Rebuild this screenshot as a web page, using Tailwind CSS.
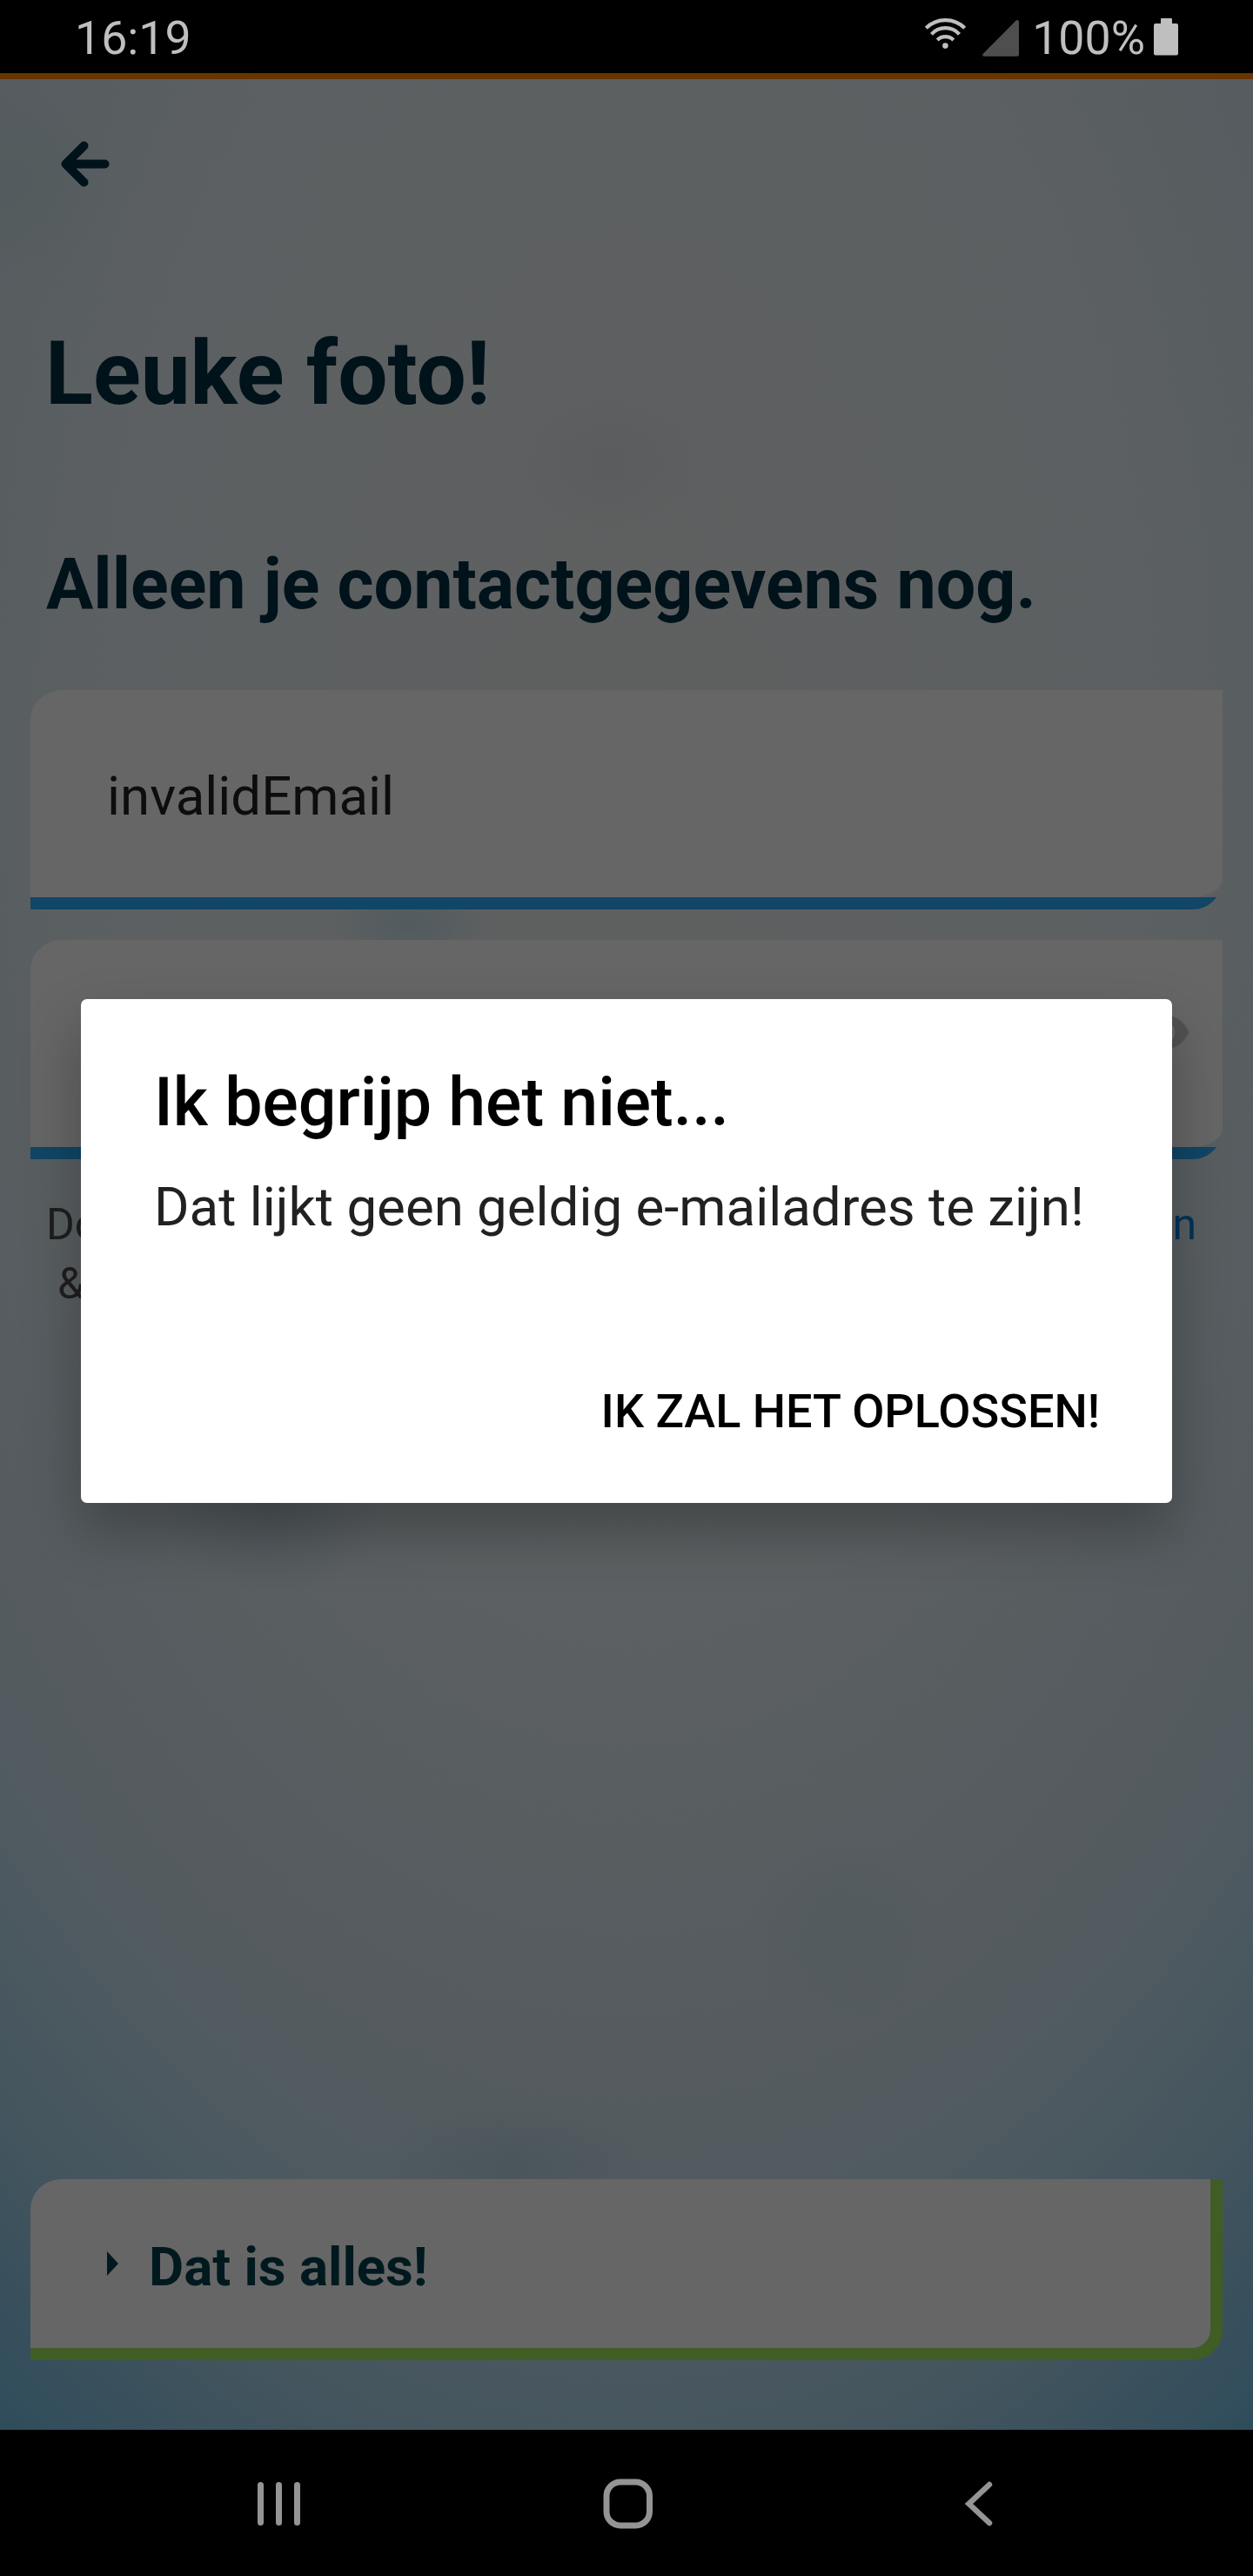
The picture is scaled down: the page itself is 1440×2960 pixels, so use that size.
<!DOCTYPE html>
<html lang="nl">
<head>
<meta charset="utf-8">
<title>Contactgegevens</title>
<script src="https://cdn.jsdelivr.net/npm/@tailwindcss/browser@4"></script>
</head>
<body class="bg-black">
<div class="relative flex h-[2960px] w-[1440px] flex-col overflow-hidden bg-black font-['Roboto',sans-serif]">

  <!-- Status bar -->
  <header class="flex h-[84px] shrink-0 items-center bg-black pl-[86px] pr-[86px] text-[53.7px] leading-[84px] text-[#bfbfbf]">
    <span class="mt-[3px]">16:19</span>
    <svg class="ml-auto h-[84px] w-[52px]" viewBox="1060 0 52 84" fill="none" stroke="#bfbfbf" stroke-width="4.2">
      <path d="M1064.3 32.3A31.4 31.4 0 0 1 1108.7 32.3M1070.5 39.3A21.5 21.5 0 0 1 1102.5 39.3M1077.2 46A13.3 13.3 0 0 1 1095.8 46"/>
      <circle cx="1086.4" cy="52.6" r="3.3" fill="#bfbfbf" stroke="none"/>
    </svg>
    <svg class="ml-[16px] h-[84px] w-[44px]" viewBox="1128 0 44 84"><path d="M1169 23Q1171 23 1171 25V63Q1171 64.7 1169 64.7H1130.500Q1128.500 64 1129.500 62L1167.500 23.700Q1168.200 23 1169 23Z" fill="#4e4e4e"/></svg>
    <span class="mt-[3px] ml-[14px]">100%</span>
    <svg class="-mr-[1px] ml-[9px] h-[84px] w-[30px]" viewBox="1325 0 30 84" fill="#bfbfbf"><rect x="1334" y="21" width="13" height="9" rx="1"/><rect x="1326" y="27" width="28" height="36.500" rx="2"/></svg>
  </header>

  <!-- Page -->
  <main class="flex h-[2708px] shrink-0 flex-col border-t-[7px] border-[#673500] bg-[radial-gradient(circle_110px_at_20px_120px,#4e595b88,transparent),radial-gradient(ellipse_90px_50px_at_470px_972px,#4a585daa,transparent),radial-gradient(ellipse_130px_100px_at_310px_1640px,#4450558a,transparent),radial-gradient(ellipse_160px_70px_at_590px_2395px,#44515888,transparent),radial-gradient(ellipse_120px_90px_at_700px_440px,#55585977,transparent),radial-gradient(circle_110px_at_970px_2130px,#4e585b88,transparent),radial-gradient(ellipse_1200px_2050px_at_720px_760px,#5f6060_0%,#5c6062_50%,#575d60_65%,#545b5f_77%,#4e5a60_86%,#44555e_97%,#2f4c5b_112%)] px-[35px] pb-[80px]">
    <svg class="mt-[64px] ml-[27px] h-[66px] w-[72px]" viewBox="62 155 72 66" fill="none" stroke="#00121a" stroke-width="10" stroke-linecap="round" stroke-linejoin="round"><path d="M96.500 167.500L75.500 188.500L96.500 209.500M77 188.500H120.500"/><path d="M76 188.500L85 180.500V196.500Z" fill="#00121a" stroke-width="1"/></svg>
    <h1 class="mt-[149px] pl-[17px] text-[101.5px] leading-[120px] font-bold text-[#00121a]">Leuke foto!</h1>
    <h2 class="mt-[134px] pl-[18px] text-[80.8px] leading-[96px] font-bold text-[#00121a]">Alleen je contactgegevens nog.</h2>

    <div class="mt-[73px] flex h-[238px] shrink-0 items-center rounded-tl-[35px] rounded-br-[35px_21px] bg-[#666] pt-[6px] pl-[88px] text-[61.8px] leading-[72px] text-[#0d0d0d]">invalidEmail</div>
    <svg class="h-[14px] w-[1370px] shrink-0" viewBox="0 0 1370 14"><path d="M0 0H1363A35 35 0 0 1 1335 14H0Z" fill="#114666"/></svg>

    <div class="mt-[35px] flex h-[238px] shrink-0 justify-end rounded-tl-[35px] rounded-br-[35px_21px] bg-[#666] pr-[36px]">
      <svg class="mt-[74px] h-[64px] w-[64px]" viewBox="0 0 24 24" fill="#525252"><path d="M12 4.500C7 4.500 2.730 7.610 1 12c1.730 4.390 6 7.500 11 7.500s9.270-3.110 11-7.500c-1.730-4.390-6-7.500-11-7.500zM12 17c-2.760 0-5-2.240-5-5s2.240-5 5-5 5 2.240 5 5-2.240 5-5 5zm0-8c-1.660 0-3 1.340-3 3s1.340 3 3 3 3-1.340 3-3-1.340-3-3-3z"/></svg>
    </div>
    <svg class="h-[14px] w-[1370px] shrink-0" viewBox="0 0 1370 14"><path d="M0 0H1363A35 35 0 0 1 1335 14H0Z" fill="#114666"/></svg>

    <div class="mt-[41px] flex justify-between pr-[30px] pl-[18px] text-[50px] leading-[68px] text-[#1e1e1e]">
      <p>Do<br><span class="pl-[13px]">&amp;</span></p>
      <span class="text-[#003358]">n</span>
    </div>

    <button class="mt-auto flex h-[208px] shrink-0 items-center rounded-tl-[35px] rounded-br-[35px] border-r-[14px] border-b-[14px] border-[#405d24] bg-[#666] pl-[88px] text-left text-[61.8px] leading-[72px] font-bold text-[#00191f]">
      <svg class="h-[28px] w-[13px]" viewBox="0 0 13 28"><path d="M0 0L13 14L0 28Z" fill="#00191f"/></svg>
      <span class="ml-[35px] pt-[7px]">Dat is alles!</span>
    </button>
  </main>

  <!-- System navigation -->
  <nav class="flex h-[168px] shrink-0 items-center justify-between bg-black pt-[4px] pr-[294px] pl-[294px]">
    <svg class="h-[60px] w-[54px]" viewBox="0 0 54 60" stroke="#949494" stroke-width="7" stroke-linecap="round"><path d="M5.500 7.500V50.500M26.500 7.500V50.500M47.500 7.500V50.500"/></svg>
    <svg class="-ml-[8px] h-[60px] w-[60px]" viewBox="0 0 60 60" fill="none" stroke="#949494" stroke-width="7"><rect x="5" y="4" width="49.500" height="50" rx="16"/></svg>
    <svg class="h-[60px] w-[42px]" viewBox="0 0 42 60" fill="none" stroke="#949494" stroke-width="6.500" stroke-linecap="round"><path d="M33 7L9.500 29L33 51"/></svg>
  </nav>

  <!-- Dialog -->
  <div class="absolute top-[1148px] left-[93px] flex h-[579px] w-[1254px] flex-col rounded-[7px] bg-white pt-[74px] pr-[83px] pl-[84px] shadow-[0_32px_66px_rgba(0,0,0,0.28)]" role="dialog">
    <h3 class="text-[77.100px] leading-[90px] font-medium text-black">Ik begrijp het niet...</h3>
    <p class="mt-[39px] text-[61.8px] leading-[72px] whitespace-nowrap text-[#212121]">Dat lijkt geen geldig e-mailadres te zijn!</p>
    <button class="mt-[167px] self-end text-[54px] leading-[64px] font-medium whitespace-nowrap text-black">IK ZAL HET OPLOSSEN!</button>
  </div>
</div>
</body>
</html>
